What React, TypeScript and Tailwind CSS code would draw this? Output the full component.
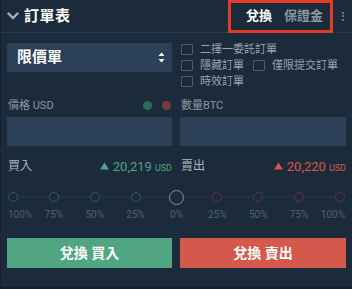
import React from "react";

const FONT = { fontFamily: "Roboto, 'Noto Sans CJK TC', sans-serif" };

function Check({ label }: { label: string }) {
  return (
    <div className="flex items-center gap-[7px] h-[16px]">
      <div className="w-[12px] h-[11px] border border-[#4e5d6e] rounded-[1px]" />
      <span className="text-[11px] text-[#9aa3ad] leading-none">{label}</span>
    </div>
  );
}

const POINTS = ["100%", "75%", "50%", "25%", "0%", "25%", "50%", "75%", "100%"];

function Slider() {
  return (
    <div className="relative h-[34px] mx-[6px]">
      <div className="absolute left-[6px] right-[169px] top-[7px] h-[2px] bg-[#1f3142]" />
      <div className="absolute left-[169px] right-[6px] top-[7px] h-[2px] bg-[#1f3142]" />
      <div className="relative flex justify-between">
        {POINTS.map((l, i) => {
          const isZero = i === 4;
          const align = i === 0 ? "items-start" : i === POINTS.length - 1 ? "items-end" : "items-center";
          const color = i < 4 ? "border-[#2b5f55]" : "border-[#5f3540]";
          return (
            <div key={i} className={`flex flex-col ${align} w-[12px]`}>
              <div className="h-[16px] w-[12px] flex items-center justify-center">
                {isZero ? (
                  <div className="shrink-0 w-[15px] h-[15px] rounded-full border border-[#858f9a] bg-[#1c2b3c]" />
                ) : (
                  <div className={`shrink-0 w-[10px] h-[10px] rounded-full border ${color} bg-[#1c2b3c]`} />
                )}
              </div>
              <span className={`mt-[5px] text-[10px] text-[#4f5f71] whitespace-nowrap leading-none ${i === 0 ? "ml-[1px]" : ""} ${i === POINTS.length - 1 ? "mr-[1px]" : ""}`}>{l}</span>
            </div>
          );
        })}
      </div>
    </div>
  );
}

function Price({ value, color }: { value: string; color: string }) {
  return (
    <span className="flex items-baseline" style={{ color }}>
      <svg width="9" height="8" viewBox="0 0 9 8" className="mr-[4px] self-center">
        <path d="M4.5 0.5 L8.8 7.5 L0.2 7.5 Z" fill={color} />
      </svg>
      <span className="text-[13px] leading-none">{value}</span>
      <span className="text-[9px] leading-none ml-[3px]">USD</span>
    </span>
  );
}

export default function App() {
  return (
    <div style={FONT} className="w-[352px] h-[289px] bg-[#1c2b3c] border-b-2 border-l border-[#15212e] flex flex-col">
      {/* header */}
      <div className="h-[33px] flex items-center justify-between border-b border-[#2b3b4d] shrink-0">
        <div className="flex items-center pl-[6px] gap-[5px]">
          <svg width="12" height="8" viewBox="0 0 12 8">
            <path d="M1.5 1.5 L6 6 L10.5 1.5" stroke="#a6aeb8" strokeWidth="2.4" fill="none" strokeLinecap="round" />
          </svg>
          <span className="text-[15px] font-bold text-white tracking-[0.5px]">訂單表</span>
        </div>
        <div className="flex items-center h-full">
          <div className="h-[33px] w-[105px] border-[3px] border-[#e23c26] flex items-center pl-[15px] gap-[12px]">
            <span className="text-[13px] font-bold text-white">兌換</span>
            <span className="text-[13px] font-bold text-[#8d97a2]">保證金</span>
          </div>
          <div className="w-[19px] flex flex-col items-center gap-[1.5px]">
            <div className="w-[2px] h-[2px] bg-[#6d7884]" />
            <div className="w-[2px] h-[2px] bg-[#6d7884]" />
            <div className="w-[2px] h-[2px] bg-[#6d7884]" />
          </div>
        </div>
      </div>

      {/* top: select + checkboxes */}
      <div className="flex px-[6px] pt-[10px] gap-[8px] h-[63px] shrink-0">
        <div className="w-[165px] h-[29px] bg-[#2c4058] flex items-center justify-between pl-[10px] pr-[7px]">
          <span className="text-[15px] font-bold text-white">限價單</span>
          <svg width="7" height="11" viewBox="0 0 7 11">
            <path d="M3.5 0.5 L6.5 4 L0.5 4 Z" fill="#ffffff" />
            <path d="M3.5 10.5 L6.5 7 L0.5 7 Z" fill="#ffffff" />
          </svg>
        </div>
        <div className="flex-1 flex flex-col -mt-[2px] pl-[1px]">
          <Check label="二擇一委託訂單" />
          <div className="flex gap-[9px]">
            <Check label="隱藏訂單" />
            <Check label="僅限提交訂單" />
          </div>
          <Check label="時效訂單" />
        </div>
      </div>

      {/* labels */}
      <div className="flex px-[6px] gap-[8px] h-[18px] shrink-0">
        <div className="w-[165px] flex items-center justify-between pr-[1px]">
          <span className="text-[11px] text-[#8c95a0] leading-none pl-[1px]">價格 USD</span>
          <div className="flex gap-[10px]">
            <div className="w-[9px] h-[9px] rounded-full bg-[#2d6a58]" />
            <div className="w-[9px] h-[9px] rounded-full bg-[#7b3a3d]" />
          </div>
        </div>
        <div className="flex-1 flex items-center pl-[1px]">
          <span className="text-[11px] text-[#8c95a0] leading-none">數量BTC</span>
        </div>
      </div>

      {/* inputs */}
      <div className="flex px-[6px] gap-[8px] mt-[3px] shrink-0">
        <div className="w-[165px] h-[29px] bg-[#2c4058]" />
        <div className="flex-1 h-[29px] bg-[#2c4058]" />
      </div>

      {/* prices */}
      <div className="flex px-[6px] gap-[8px] mt-[12px] h-[16px] shrink-0">
        <div className="w-[165px] flex items-center justify-between">
          <span className="text-[12px] text-[#aab2bb] pl-[1px] leading-none">買入</span>
          <Price value="20,219" color="#4fa583" />
        </div>
        <div className="flex-1 flex items-center justify-between">
          <span className="text-[12px] text-[#aab2bb] pl-[1px] leading-none">賣出</span>
          <Price value="20,220" color="#dc5648" />
        </div>
      </div>

      {/* slider */}
      <div className="mt-[15px] shrink-0">
        <Slider />
      </div>

      {/* buttons */}
      <div className="flex px-[6px] gap-[8px] mt-[15px] shrink-0">
        <button className="w-[165px] h-[30px] bg-[#50a583] text-white text-[14px] font-bold">兌換 買入</button>
        <button className="flex-1 h-[30px] bg-[#d4584c] text-white text-[14px] font-bold">兌換 賣出</button>
      </div>
    </div>
  );
}
